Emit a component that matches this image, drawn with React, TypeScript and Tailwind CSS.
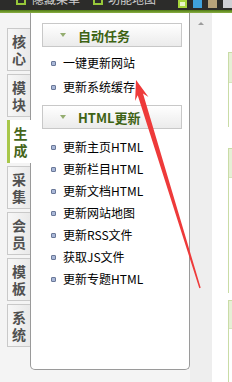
import React from "react";

const tabs = ["核心", "模块", "生成", "采集", "会员", "模板", "系统"];
const autoItems = ["一键更新网站", "更新系统缓存"];
const htmlItems = ["更新主页HTML", "更新栏目HTML", "更新文档HTML", "更新网站地图", "更新RSS文件", "获取JS文件", "更新专题HTML"];

function Bullet() {
  return <span className="w-[5px] h-[5px] rounded-[1px] border border-[#6a7898] bg-[#aab8d8] shrink-0" />;
}

function SectionHeader({title}: {title: string}) {
  return (
    <div className="h-[24px] w-[140px] flex items-center border border-[#c8c8c8] bg-gradient-to-b from-white to-[#ebebeb]">
      <span className="ml-[17px] w-0 h-0 border-l-[3px] border-r-[3px] border-t-[4px] border-l-transparent border-r-transparent border-t-[#94ad70]" />
      <span className="ml-[12px] text-[13px] font-bold text-[#3e6314] leading-none">{title}</span>
    </div>
  );
}

function MenuItem({label, h}: {label: string; h: string}) {
  return (
    <div className={`${h} flex items-center pl-[9px]`}>
      <Bullet />
      <span className="ml-[7px] text-[12px] text-black leading-none">{label}</span>
    </div>
  );
}

function TopBar() {
  return (
    <div className="h-[10px] bg-[#2c2c2a] flex items-start overflow-hidden">
      <span className="ml-[16px] -mt-[4px] w-[10px] h-[9px] border-2 border-[#97c83a] bg-[#2c2c2a]" />
      <span className="ml-[6px] -mt-[7px] text-[12px] leading-[12px] text-[#cfcfcf]">隐藏菜单</span>
      <span className="ml-[13px] -mt-[4px] w-[10px] h-[9px] border-2 border-[#97c83a] bg-[#2c2c2a]" />
      <span className="ml-[5px] -mt-[7px] text-[12px] leading-[12px] text-[#cfcfcf]">功能地图</span>
      <div className="ml-auto flex gap-[6px]">
        <span className="w-[9px] h-[8px] border-2 border-[#a6d63c] bg-[#e8f5c8]" />
        <span className="w-[9px] h-[8px] bg-[#3fa2dc]" />
        <span className="w-[9px] h-[8px] bg-[#b7a37a]" />
        <span className="w-[9px] h-[8px] bg-[#cfd0d4]" />
      </div>
    </div>
  );
}

export default function App() {
  return (
    <div className="relative w-[232px] h-[382px] overflow-hidden bg-[#f4f4f4] font-['Noto_Sans_CJK_SC','Liberation_Sans',sans-serif]">
      <TopBar />
      <div className="h-[3px] bg-gradient-to-b from-[#4f7a12] to-[#8bb043]" />
      <div className="flex h-[369px]">
        <div className="w-[30px] pt-[15px] flex flex-col items-end gap-[3px]">
          {tabs.map((t) => {
            const active = t === "生成";
            return (
              <div
                key={t}
                className={
                  active
                    ? "relative z-10 -mr-px w-[24px] h-[43px] flex items-center justify-center border-l-[3px] border-[#a8c74a] bg-white text-[#46661a]"
                    : "w-[23px] h-[43px] flex items-center justify-center border border-r-0 border-[#c9c9c9] bg-gradient-to-r from-[#f7f7f7] to-[#e9e9e9] text-[#505050]"
                }
              >
                <span className="w-[14px] text-[14px] font-bold leading-[17px] break-all text-center">{t}</span>
              </div>
            );
          })}
        </div>
        <div className="w-[160px] h-[357px] bg-white border-l border-r border-b border-[#9a9a9a] rounded-b-[5px] pl-[11px] pt-[10px]">
          <SectionHeader title="自动任务" />
          <div className="mt-[4px]">
            {autoItems.map((i) => <MenuItem key={i} label={i} h="h-[24px]" />)}
          </div>
          <div className="mt-[6px]">
            <SectionHeader title="HTML更新" />
          </div>
          <div className="mt-[7px]">
            {htmlItems.map((i) => <MenuItem key={i} label={i} h="h-[22px]" />)}
          </div>
        </div>
        <div className="w-[22px] bg-[#eeeeee] flex justify-center pt-[9px]">
          <span className="w-0 h-0 border-l-[3px] border-r-[3px] border-b-[3px] border-l-transparent border-r-transparent border-b-[#9c9c9c]" />
        </div>
        <div className="flex-1 bg-white pl-[16px] pt-[39px] flex flex-col">
          <div className="h-[75px] border-l border-t border-[#c9dca6]">
            <div className="h-[30px] bg-[#e6f0d6] border-b border-[#d6e4bd]" />
          </div>
          <div className="mt-[21px] h-[145px] border-l border-t border-[#c9dca6]">
            <div className="h-[29px] bg-[#e6f0d6] border-b border-[#d6e4bd]" />
          </div>
          <div className="mt-[7px] flex-1 border-l border-t border-[#c9dca6]">
            <div className="h-[28px] bg-[#e6f0d6] border-b border-[#d6e4bd]" />
          </div>
        </div>
      </div>
      <svg className="absolute inset-0 pointer-events-none" width="232" height="382" viewBox="0 0 232 382">
        <polygon
          points="136,80 148.5,97.1 143,93.5 200.7,287.8 199.3,288.2 137.7,95.2 135.1,101.1"
          fill="#ee3a3a"
        />
      </svg>
    </div>
  );
}
